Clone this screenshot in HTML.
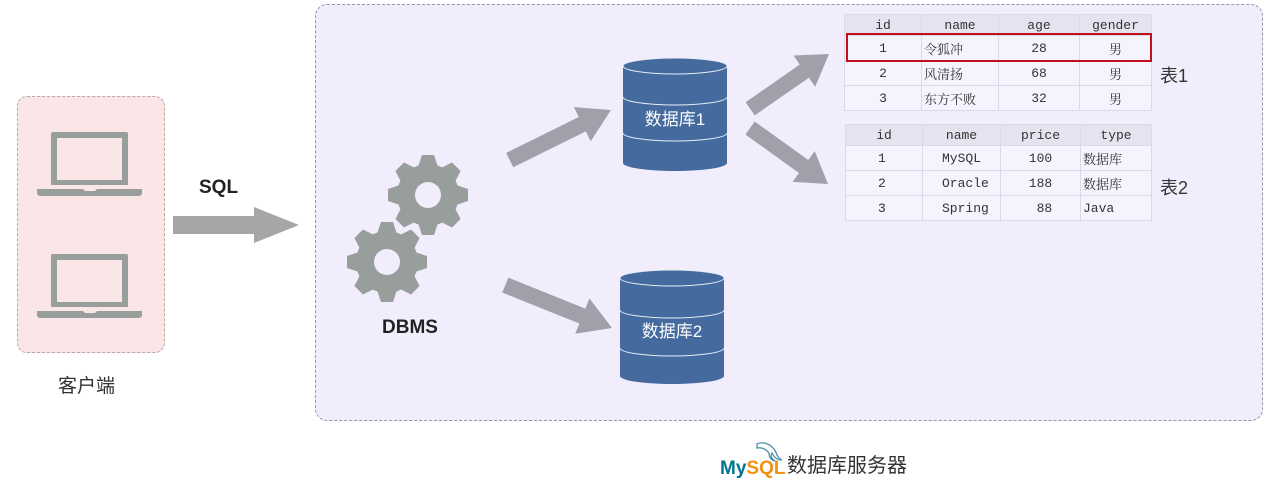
<!DOCTYPE html>
<html><head><meta charset="utf-8"><style>
body{margin:0;width:1280px;height:483px;background:#fff;position:relative;overflow:hidden;font-family:"Liberation Sans","Noto Sans CJK SC",sans-serif}
.abs{position:absolute}
table{border-collapse:collapse;position:absolute;font-family:"Liberation Mono","Noto Serif CJK SC",monospace;font-size:13px;color:#333;background:#f5f3fd}
td{border:1px solid #dcd8e8;padding:0;height:24px}
tr.h td{background:#e6e3f0;height:20px}
</style></head><body>
<div class="abs" style="left:17px;top:96px;width:146px;height:255px;background:#fae6e7;border:1px dashed #b8a8a8;border-radius:10px"></div>
<div class="abs" style="left:315px;top:4px;width:946px;height:415px;background:#f1edfd;border:1px dashed #9a94aa;border-radius:12px"></div>
<svg class="abs" style="left:0;top:0" width="1280" height="483">
<g fill="#979e9b">
<path fill-rule="evenodd" d="M51 134a2 2 0 0 1 2-2h73a2 2 0 0 1 2 2v51h-77zM57 138v42h65v-42z"/>
<path d="M37 189h46l2 2h10l2-2h45v4a3 3 0 0 1-3 3h-99a3 3 0 0 1-3-3z"/>
<path fill-rule="evenodd" d="M51 256a2 2 0 0 1 2-2h73a2 2 0 0 1 2 2v51h-77zM57 260v42h65v-42z"/>
<path d="M37 311h46l2 2h10l2-2h45v4a3 3 0 0 1-3 3h-99a3 3 0 0 1-3-3z"/>
</g>
<polygon fill="#a6a6a6" points="173,216 254,216 254,207 299,225 254,243 254,234 173,234"/>
<g fill="#a29faa">
<g transform="translate(611,110) rotate(-26.3)"><polygon points="-113,-8 -32,-8 -32,-19 0,0 -32,19 -32,8 -113,8"/></g>
<g transform="translate(612,328) rotate(21.9)"><polygon points="-115,-8 -32,-8 -32,-19 0,0 -32,19 -32,8 -115,8"/></g>
<g transform="translate(829,54) rotate(-34.8)"><polygon points="-96,-8 -30,-8 -30,-19 0,0 -30,19 -30,8 -96,8"/></g>
<g transform="translate(828,184) rotate(35.7)"><polygon points="-96,-8 -30,-8 -30,-19 0,0 -30,19 -30,8 -96,8"/></g>
</g>
<defs><g id="gear"><circle r="31"/>
<path id="tooth" d="M-10 -28 L-6 -40 L6 -40 L10 -28Z"/>
<use href="#tooth" transform="rotate(45)"/><use href="#tooth" transform="rotate(90)"/><use href="#tooth" transform="rotate(135)"/>
<use href="#tooth" transform="rotate(180)"/><use href="#tooth" transform="rotate(225)"/><use href="#tooth" transform="rotate(270)"/><use href="#tooth" transform="rotate(315)"/></g></defs>
<g fill="#979e9b"><use href="#gear" transform="translate(428,195)"/><use href="#gear" transform="translate(387,262)"/></g>
<circle cx="428" cy="195" r="13" fill="#f1edfd"/><circle cx="387" cy="262" r="13" fill="#f1edfd"/>
<g fill="#446a9e" stroke="#e8ecf5" stroke-width="1">
<path d="M623 66v97a52 8 0 0 0 104 0v-97" stroke="none"/>
<ellipse cx="675" cy="66" rx="52" ry="8"/>
<path d="M623 97a52 8 0 0 0 104 0M623 133a52 8 0 0 0 104 0" fill="none"/>
<path d="M620 278v98a52 8 0 0 0 104 0v-98" stroke="none"/>
<ellipse cx="672" cy="278" rx="52" ry="8"/>
<path d="M620 310a52 8 0 0 0 104 0M620 348a52 8 0 0 0 104 0" fill="none"/>
</g>
<text x="675" y="125" fill="#fff" font-size="17" text-anchor="middle" font-family="Liberation Sans,Noto Sans CJK SC,sans-serif">数据库1</text>
<text x="672" y="337" fill="#fff" font-size="17" text-anchor="middle" font-family="Liberation Sans,Noto Sans CJK SC,sans-serif">数据库2</text>
<path d="M757 444c6-3 13 0 17 5 3 4 3 9 8 11-5 0-8-3-10-7-2 3 0 6 3 8-4-1-6-4-6-8-3-4-8-6-12-5z" fill="none" stroke="#4a90a4" stroke-width="1.3"/>
<text x="720" y="474" font-size="19" font-weight="bold" fill="#00758f" font-family="Liberation Sans,sans-serif">My<tspan fill="#f29111">SQL</tspan></text>
</svg>
<div class="abs" style="left:199px;top:177px;font-size:19px;font-weight:bold;color:#222">SQL</div>
<div class="abs" style="left:382px;top:317px;font-size:19px;font-weight:bold;color:#222">DBMS</div>
<div class="abs" style="left:58px;top:371px;font-size:19px;color:#333">客户端</div>
<div class="abs" style="left:787px;top:449px;font-size:20px;color:#333">数据库服务器</div>
<div class="abs" style="left:1160px;top:62px;font-size:18px;color:#333">表1</div>
<div class="abs" style="left:1160px;top:174px;font-size:18px;color:#333">表2</div>
<table style="left:844px;top:14px;width:308px">
<tr class="h"><td style="width:76px;text-align:center">id</td><td style="width:76px;text-align:center">name</td><td style="width:80px;text-align:center">age</td><td style="text-align:center">gender</td></tr>
<tr><td style="text-align:center">1</td><td style="padding-left:2px">令狐冲</td><td style="text-align:center">28</td><td style="text-align:center">男</td></tr>
<tr><td style="text-align:center">2</td><td style="padding-left:2px">风清扬</td><td style="text-align:center">68</td><td style="text-align:center">男</td></tr>
<tr><td style="text-align:center">3</td><td style="padding-left:2px">东方不败</td><td style="text-align:center">32</td><td style="text-align:center">男</td></tr>
</table>
<div class="abs" style="left:846px;top:33px;width:302px;height:25px;border:2px solid #c0101a"></div>
<table style="left:845px;top:124px;width:307px">
<tr class="h"><td style="width:76px;text-align:center">id</td><td style="width:77px;text-align:center">name</td><td style="width:79px;text-align:center">price</td><td style="text-align:center">type</td></tr>
<tr><td style="padding-left:32px">1</td><td style="padding-left:19px">MySQL</td><td style="text-align:center">100</td><td style="padding-left:2px">数据库</td></tr>
<tr><td style="padding-left:32px">2</td><td style="padding-left:19px">Oracle</td><td style="text-align:center">188</td><td style="padding-left:2px">数据库</td></tr>
<tr><td style="padding-left:32px">3</td><td style="padding-left:19px">Spring</td><td style="text-align:center">&nbsp;88</td><td style="padding-left:2px">Java</td></tr>
</table>
</body></html>
